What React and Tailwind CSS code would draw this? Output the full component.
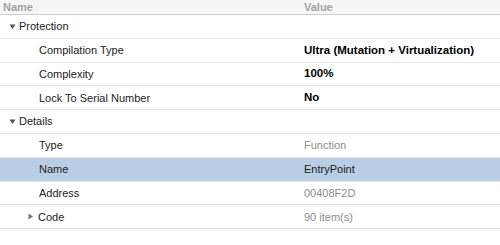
const rows = [
  { label: "Protection", level: 0, toggle: "open" },
  { label: "Compilation Type", level: 1, value: "Ultra (Mutation + Virtualization)", bold: true },
  { label: "Complexity", level: 1, value: "100%", bold: true },
  { label: "Lock To Serial Number", level: 1, value: "No", bold: true },
  { label: "Details", level: 0, toggle: "open" },
  { label: "Type", level: 1, value: "Function" },
  { label: "Name", level: 1, value: "EntryPoint", selected: true },
  { label: "Address", level: 1, value: "00408F2D" },
  { label: "Code", level: 1, value: "90 item(s)", toggle: "closed" },
];

function Arrow({ open }) {
  return (
    <svg width="7" height="7" viewBox="0 0 7 7" className="shrink-0">
      {open ? (
        <path d="M0.5 1.5 L6.5 1.5 L3.5 6 Z" fill="#555" />
      ) : (
        <path d="M1.5 0.5 L6 3.5 L1.5 6.5 Z" fill="#777" />
      )}
    </svg>
  );
}

export default function App() {
  return (
    <div
      className="w-[500px] h-[245px] bg-white text-[11px] text-[#222] overflow-hidden"
      style={{ fontFamily: '"Liberation Sans", Arial, sans-serif' }}
    >
      <div className="flex h-[15px] items-center bg-[#f5f5f5] border-b border-[#cfcfcf] font-bold text-[#a3a3a3]">
        <div className="w-[302px] pl-[3px]">Name</div>
        <div className="pl-[2px]">Value</div>
      </div>
      {rows.map((r) => (
        <div
          key={r.label}
          className={
            "flex h-[23.8px] items-center border-b border-[#e3e3e3] " +
            (r.selected ? "bg-[#b9cde5]" : "")
          }
        >
          <div className="w-[302px] flex items-center">
            {r.level === 0 ? (
              <div className="flex items-center gap-[3px] pl-[9px]">
                <Arrow open />
                <span>{r.label}</span>
              </div>
            ) : r.toggle === "closed" ? (
              <div className="flex items-center gap-[4px] pl-[27px]">
                <Arrow open={false} />
                <span>{r.label}</span>
              </div>
            ) : (
              <span className="pl-[39px]">{r.label}</span>
            )}
          </div>
          {r.value && (
            <div
              className={
                "pl-[2px] " +
                (r.bold
                  ? "font-bold text-black text-[11.5px]"
                  : r.selected
                  ? "text-[#222]"
                  : "text-[#8c8c8c]")
              }
            >
              {r.value}
            </div>
          )}
        </div>
      ))}
    </div>
  );
}
